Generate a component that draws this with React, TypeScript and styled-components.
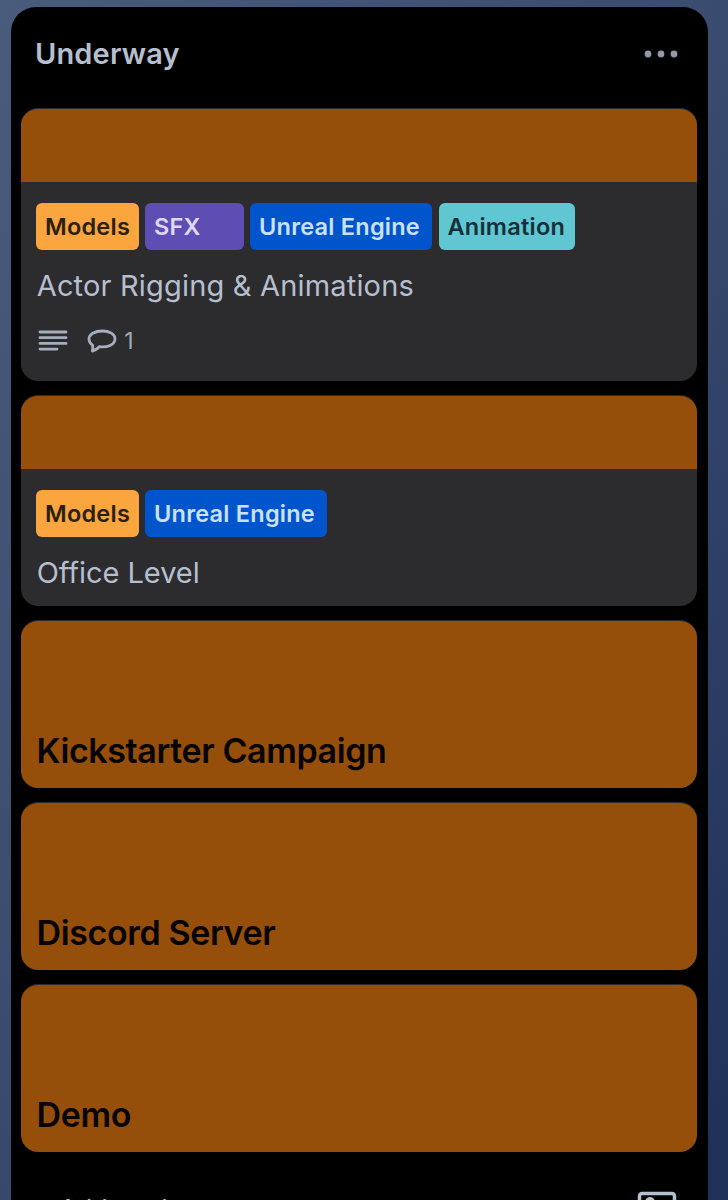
import React from 'react';
import styled, { createGlobalStyle } from 'styled-components';

const Global = createGlobalStyle`
  * { box-sizing: border-box; }
  body { margin: 0; overflow: hidden; font-family: Inter, "Liberation Sans", sans-serif; }
`;
const Board = styled.main`
  width: 728px; height: 1200px; overflow: hidden;
  padding: 6.5px 20px 0 11px;
  background: linear-gradient(125deg, #4a5c7b 0%, #384b6e 50%, #20325a 96%);
`;
const Column = styled.section`
  height: 1240px; background: #000; border-radius: 25px 25px 0 0;
  padding: 0 10.7px 0 10.4px;
`;
const Header = styled.header`
  display: flex; align-items: center; justify-content: space-between;
  height: 101.5px; padding: 0 18.3px 7.5px 13.6px;
`;
const Title = styled.h2`
  margin: 0; font-size: 29px; line-height: 40px; font-weight: 600; color: #b6bfce;
  letter-spacing: 0.15px;
`;
const Cards = styled.div`
  display: flex; flex-direction: column; gap: 14.5px;
`;
const Card = styled.article<{ $height: number }>`
  height: ${p => p.$height}px; flex: none; overflow: hidden;
  border-top: 1px solid #2c2c2e; border-radius: 17px; background: #2c2c2e;
`;
const Cover = styled.div`
  height: 73px; background: #964f0b;
`;
const Body = styled.div`
  padding: 21.3px 15px 0;
`;
const Labels = styled.div`
  display: flex; gap: 6.5px;
`;
const Label = styled.span<{ $bg: string; $fg: string; $width: number }>`
  width: ${p => p.$width}px; height: 47px; padding-left: 8.6px; border-radius: 6px;
  background: ${p => p.$bg}; color: ${p => p.$fg};
  font-size: 23.5px; line-height: 47px; font-weight: 600; letter-spacing: 0.24px; white-space: nowrap;
`;
const Name = styled.h3<{ $tracking: number }>`
  margin: 15.8px 0 0 0.3px; font-size: 29px; line-height: 40px; font-weight: 400;
  color: #b6bfce; letter-spacing: ${p => p.$tracking}px; white-space: nowrap;
`;
const Meta = styled.div`
  display: flex; align-items: center; height: 30px; margin-top: 20px; padding-left: 2px;
  color: #9fa9b8; font-size: 23px;
  svg { flex: none; }
`;
const CommentIcon = styled.svg`margin-left: 19px;`;
const Count = styled.span`margin-left: 6.8px;`;
const FullCover = styled.div`
  height: 100%; display: flex; align-items: flex-end; padding: 0 15.2px 15.6px;
  background: #964f0b; color: #060300;
`;
const CoverName = styled.h3`
  margin: 0; font-size: 34px; line-height: 42px; font-weight: 600; letter-spacing: -0.4px;
`;
const Footer = styled.footer`
  display: flex; justify-content: space-between; align-items: flex-start;
  padding: 39.5px 20.5px 0 37.8px; color: #b6bfce; font-size: 25.5px; line-height: 40px;
`;
const AddCard = styled.span`margin-top: -2px; letter-spacing: -0.2px;`;

const tags = {
  models: { text: 'Models', bg: '#faa53d', fg: '#292010', width: 102.5 },
  sfx: { text: 'SFX', bg: '#5e4db2', fg: '#dfd8fd', width: 98.5 },
  unreal: { text: 'Unreal Engine', bg: '#0055cc', fg: '#cce0ff', width: 182 },
  animation: { text: 'Animation', bg: '#60c6d2', fg: '#153039', width: 136.5 },
};
function Tag({ kind }: { kind: keyof typeof tags }) {
  const t = tags[kind];
  return <Label $bg={t.bg} $fg={t.fg} $width={t.width}>{t.text}</Label>;
}

export default function App() {
  return (
    <>
      <Global />
      <Board>
        <Column>
          <Header>
            <Title>Underway</Title>
            <svg width="36" height="8" viewBox="0 0 36 8" fill="#8f99a9">
              <circle cx="5" cy="4" r="3.4" /><circle cx="18" cy="4" r="3.4" /><circle cx="31" cy="4" r="3.4" />
            </svg>
          </Header>
          <Cards>
            <Card $height={272.5}>
              <Cover />
              <Body>
                <Labels><Tag kind="models" /><Tag kind="sfx" /><Tag kind="unreal" /><Tag kind="animation" /></Labels>
                <Name $tracking={0.18}>Actor Rigging &amp; Animations</Name>
                <Meta>
                  <svg width="30" height="22" viewBox="0 0 30 22" stroke="#a5aebc" strokeWidth="2.8" strokeLinecap="round">
                    <path d="M2 2H28M2 7.700H28M2 13.400H28M2 19.100H19" />
                  </svg>
                  <CommentIcon width="30" height="24" viewBox="0 0 30 24" fill="none" stroke="#a5aebc" strokeWidth="2.8" strokeLinejoin="round">
                    <path d="M15.500 2C7.500 2 2 5.300 2 10C2 12.500 3.300 14.600 5.600 16.100C6.100 18.400 5.800 20.300 5.300 22C8.500 21.600 10.600 19.700 12.200 17.700C21.500 18.600 28 15.300 28 9.700C28 5 22.500 2 15.500 2Z" />
                  </CommentIcon>
                  <Count>1</Count>
                </Meta>
              </Body>
            </Card>
            <Card $height={210.5}>
              <Cover />
              <Body>
                <Labels><Tag kind="models" /><Tag kind="unreal" /></Labels>
                <Name $tracking={-0.05}>Office Level</Name>
              </Body>
            </Card>
            {['Kickstarter Campaign', 'Discord Server', 'Demo'].map(name => (
              <Card key={name} $height={167.5}>
                <FullCover><CoverName>{name}</CoverName></FullCover>
              </Card>
            ))}
          </Cards>
          <Footer>
            <AddCard>Add card</AddCard>
            <svg width="40" height="34" viewBox="0 0 40 34" fill="none" stroke="#b6bfce" strokeWidth="3.500">
              <rect x="2.500" y="2.500" width="35" height="29" rx="2.500" />
              <circle cx="13" cy="11" r="3.500" strokeWidth="3" />
              <path d="M5 27L15 19L21 23L29 14L36 22" />
            </svg>
          </Footer>
        </Column>
      </Board>
    </>
  );
}
